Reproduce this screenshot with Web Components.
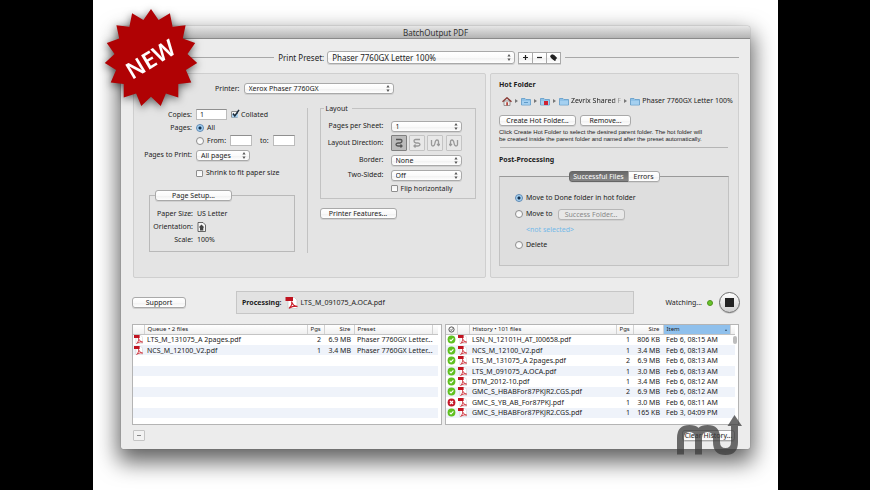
<!DOCTYPE html>
<html lang="en">
<head>
<meta charset="utf-8">
<title>BatchOutput PDF</title>
<style>
html, body { height: 100%; }
body { margin: 0; background: #000; color: #1c1c1c; font: 7px/10px "Noto Sans", "Open Sans", sans-serif; }
</style>
</head>
<body>
<promo-stage>
  <new-badge slot="badge"></new-badge>
  <app-window heading="BatchOutput PDF">
    <preset-bar></preset-bar>
    <div slot="panels"><printer-panel></printer-panel></div>
    <div slot="side"><hot-folder-panel></hot-folder-panel></div>
    <status-bar slot="status"></status-bar>
    <file-queue slot="queue"></file-queue>
    <file-history slot="history"></file-history>
    <footer-bar slot="footer"></footer-bar>
  </app-window>
  <mu-logo slot="logo"></mu-logo>
</promo-stage>

<script>
const controls = `
:host { display: block; }
* { box-sizing: border-box; }
button, input, select { font: inherit; color: inherit; margin: 0; }
button, .select select {
  height: 11px; padding: 0 4px; line-height: 9px; border: 1px solid #a9a9a9; border-radius: 3px;
  background: linear-gradient(#fff, #fafafa 50%, #f0f0f0 51%, #fff); box-shadow: 0 1px 0 #d0d0d0; white-space: nowrap;
}
.select { position: relative; display: block; }
.select select { appearance: none; width: 100%; display: block; padding: 0 12px 0 4px; }
.select svg { position: absolute; right: 4px; top: 2px; width: 4px; height: 7px; fill: #555; pointer-events: none; }
input[type=text] { height: 11px; padding: 0 3px; border: 1px solid #bcbcbc; border-top-color: #8f8f8f; background: #fff; border-radius: 0; }
input[type=radio], input[type=checkbox] {
  appearance: none; width: 8px; height: 8px; flex: none; border: 1px solid #8e8e8e; background: linear-gradient(#f2f2f2, #fff);
}
input[type=radio] { border-radius: 50%; }
input[type=checkbox] { border-radius: 1px; width: 7px; height: 7px; }
input[type=radio]:checked { border-color: #5b87b4; background: radial-gradient(circle, #15304d 0 1px, #9ccdf0 2px, #cfe9fb 4px); }
label { display: flex; align-items: center; gap: 3px; white-space: nowrap; }
fieldset { margin: 0; min-width: 0; border: 1px solid #b9b9b9; padding: 0; }
`;
const arrows = '<svg viewBox="0 0 4 7"><path d="M2 0 3.6 2.6H.4zM2 7 .4 4.4h3.2z"/></svg>';
const pick = (id, text) => `<span class="select"><select id="${id}"><option>${text}</option></select>${arrows}</span>`;
const pdfIcon = `<svg class="pdf" viewBox="0 0 12 12"><path d="M2.5.5h6.5l2.5 2.5v8.5h-9z" fill="#fff" stroke="#c9c9c9" stroke-width=".7"/><path d="M0 0h7.5v4H0z" fill="#c01320"/><path d="M6 4.500C7 7 9 9.500 11 9.500S9 7.800 3.500 11.200C5.500 9.500 6.800 6.500 6 4.500Z" fill="none" stroke="#c9202c" stroke-width="1.100"/></svg>`;
const folderIcon = (extra = '') => `<svg class="ico" viewBox="0 0 10 9"><path d="M.5 1.500h3.500l1 1h4.500v5.500h-9z" fill="#8fc2e8" stroke="#5f9ac8" stroke-width=".8"/><path d="M1 4h8v3.600H1z" fill="#a5d0f0"/>${extra}</svg>`;

function define(name, render) {
  customElements.define(name, class extends HTMLElement {
    constructor() {
      super();
      const t = document.createElement('template');
      t.innerHTML = render(this);
      this.attachShadow({ mode: 'open' }).append(t.content.cloneNode(true));
    }
  });
}

define('promo-stage', () => `
<style>
:host { display: block; box-sizing: border-box; min-height: 100%; padding: 0 92px 0 93px; }
main { box-sizing: border-box; position: relative; min-height: 100vh; background: #fff; padding: 26px 28px 40px; }
::slotted([slot=badge]) { position: absolute; left: 6px; top: 2px; z-index: 2; }
::slotted([slot=logo]) { position: absolute; right: 34px; top: 414px; z-index: 2; }
</style>
<main><slot name="badge"></slot><slot></slot><slot name="logo"></slot></main>`);

define('app-window', el => `
<style>
* { box-sizing: border-box; }
:host { display: block; background: #ececec; border-radius: 3px 3px 2px 2px; box-shadow: 0 0 1px #555, 0 10px 22px 3px rgba(0,0,0,.62); padding-bottom: 8px; }
header { height: 13px; background: linear-gradient(#e6e6e6, #b4b4b4); border-bottom: 1px solid #8a8a8a; border-radius: 3px 3px 0 0; }
h1 { margin: 0; font-size: 8px; line-height: 13px; font-weight: 400; text-align: center; color: #333; }
.panels { display: grid; grid-template-columns: minmax(0, 353fr) minmax(0, 249fr); gap: 4px; padding: 0 11px 0 12px; margin-top: 9px; }
.panels > slot::slotted(div) { border: 1px solid #cfcfcf; border-radius: 2px; background: #e4e4e4; height: 205px; box-sizing: border-box; }
.tables { display: grid; grid-template-columns: minmax(0, 310fr) minmax(0, 294fr); gap: 3px; padding: 0 11px 0 11px; margin-top: 10px; }
</style>
<header><h1>${el.getAttribute('heading') || 'BatchOutput PDF'}</h1></header>
<slot></slot>
<div class="panels"><slot name="panels"></slot><slot name="side"></slot></div>
<slot name="status"></slot>
<div class="tables"><slot name="queue"></slot><slot name="history"></slot></div>
<slot name="footer"></slot>`);

define('preset-bar', () => `
<style>${controls}
.bar { display: flex; align-items: center; font-size: 8px; height: 13px; padding: 0 11px 0 12px; margin-top: 12px; }
.rule { height: 1px; background: #a8a8a8; flex: 143 1 0; }
.rule.end { flex: 176 1 0; }
label { margin: 0 4px 0 4px; gap: 3px; }
.select { width: 188px; }
.select select { height: 13px; line-height: 11px; }
.select svg { top: 3px; }
.group { display: flex; margin-right: 4px; }
.group button { width: 15px; height: 12px; padding: 0; display: grid; place-items: center; border-radius: 0; margin-left: -1px; }
.group svg { width: 9px; height: 9px; }
</style>
<div class="bar"><span class="rule"></span>
<label for="preset">Print Preset: ${pick('preset', 'Phaser 7760GX Letter 100%')}</label>
<div class="group">
<button aria-label="Add preset"><svg viewBox="0 0 9 9"><path d="M4.500 2v5M2 4.500h5" stroke="#222" stroke-width="1.200"/></svg></button>
<button aria-label="Remove preset"><svg viewBox="0 0 9 9"><path d="M2 4.500h5" stroke="#222" stroke-width="1.200"/></svg></button>
<button aria-label="Edit preset"><svg viewBox="0 0 9 9"><path d="M1 3 3 1.200 5.200 2 8.200 5 5.500 7.800 2 5z" fill="#222"/><path d="m3.500 5 3 2.500" stroke="#222" stroke-width="1.400"/></svg></button>
</div><span class="rule end"></span></div>`);

define('printer-panel', () => `
<style>${controls}
.printer { display: flex; align-items: center; gap: 4px; padding-left: 81px; margin-top: 9px; }
.printer .select { width: 150px; }
.cols { display: grid; grid-template-columns: minmax(0, 174fr) minmax(0, 178fr); margin-top: 14px; }
.left { border-right: 1px solid #c2c2c2; height: 145px; }
.rows { display: grid; grid-template-columns: 58px 1fr; column-gap: 4px; align-items: center; grid-template-rows: 13px 14px 11px 18px 18px; }
.rows > :nth-child(odd) { text-align: right; justify-content: end; }
.line { display: flex; align-items: center; gap: 4px; }
.line > input[type=text] { width: 22px; }
#copies { width: 31px; }
.line .select { width: 54px; }
.to { margin-left: 4px; }
.check { position: relative; display: grid; }
.check svg { position: absolute; left: 0; top: -2px; width: 9px; height: 9px; pointer-events: none; }
.setup { margin: 13px 12px 0 15px; height: 57px; padding: 0 0 0 5px; border: 1px solid #b9b9b9; }
.setup button { width: 77px; display: block; margin-top: -6px; }
dl { display: grid; grid-template-columns: 38px 1fr; column-gap: 4px; grid-auto-rows: 13px; margin: 6px 0 0; align-items: center; }
dt { display: flex; justify-content: end; white-space: nowrap; }
dd { margin: 0; display: flex; }
dd svg { width: 9px; height: 10px; }
.right { padding: 0 9px 0 12px; }
.layout { height: 91px; border: 1px solid #c2c2c2; }
.layout h2 { font: inherit; margin: -5px 0 0 3px; padding: 0 2px; background: #e4e4e4; width: 28px; white-space: nowrap; }
.grid { display: grid; grid-template-columns: 63px 1fr; column-gap: 7px; grid-template-rows: 16px 18px 16px 14px 13px; align-items: center; margin: 4px 13px 0 0; }
.grid > :nth-child(odd) { text-align: right; justify-content: end; white-space: nowrap; }
.dirs { display: flex; justify-content: space-between; }
.dirs button { width: 16px; height: 16px; padding: 0; display: grid; place-items: center; border-radius: 1px; background: #e8e8e8; border-color: #c4c4c4; box-shadow: none; }
.dirs button[aria-pressed=true] { background: #bcbcbc; border-color: #808080; }
.dirs svg { width: 10px; height: 10px; fill: none; stroke: #999; stroke-width: 1.300; }
.dirs button[aria-pressed=true] svg { stroke: #555; }
.features { width: 77px; margin-top: 9px; }
</style>
<div class="printer"><label for="printer">Printer:</label>${pick('printer', 'Xerox Phaser 7760GX')}</div>
<div class="cols">
<div class="left">
 <div class="rows">
  <label for="copies">Copies:</label>
  <div class="line"><input id="copies" type="text" value="1"><label><span class="check"><input type="checkbox" checked><svg viewBox="0 0 9 9"><path d="M1 5h6v3.500H1z" fill="#a9d3f2"/><path d="m2 4.500 1.800 2.500L8 .8" fill="none" stroke="#1d2b3a" stroke-width="1.500"/></svg></span>Collated</label></div>
  <span>Pages:</span>
  <label><input type="radio" name="pages" checked>All</label>
  <span></span>
  <div class="line"><label><input type="radio" name="pages">From:</label><input type="text" aria-label="From page"><label class="to" for="to">to:</label><input id="to" type="text"></div>
  <label for="which">Pages to Print:</label>
  <div class="line">${pick('which', 'All pages')}</div>
  <span></span>
  <label><input type="checkbox">Shrink to fit paper size</label>
 </div>
 <div class="setup"><button>Page Setup...</button>
  <dl><dt>Paper Size:</dt><dd>US Letter</dd><dt>Orientation:</dt><dd><svg viewBox="0 0 9 10"><path d="M1 .5h5L8.500 3v6.500H1z" fill="#f5f5f5" stroke="#444" stroke-width=".8"/><path d="M3 8.500V6L2 5l2.500-2.500L7 5 6.300 6v2.500z" fill="#444"/></svg></dd><dt>Scale:</dt><dd>100%</dd></dl>
 </div>
</div>
<div class="right">
 <div class="layout"><h2>Layout</h2>
  <div class="grid">
   <label for="pps">Pages per Sheet:</label>${pick('pps', '1')}
   <span>Layout Direction:</span>
   <div class="dirs">
    <button aria-label="Across then down" aria-pressed="true"><svg viewBox="0 0 10 10"><path d="M2 1.500h4.500q1.500 0 1.500 1.500t-2 2H4Q2 5.200 2 6.500T4 8h4M6.500 6.500 8 8 6.500 9.500"/></svg></button>
    <button aria-label="Reversed across"><svg viewBox="0 0 10 10"><path d="M8 1.500H3.500Q2 1.500 2 3t2 2h2q2 .2 2 1.500T6 8H2.500M3.500 6.500 2 8l1.500 1.500"/></svg></button>
    <button aria-label="Down then across"><svg viewBox="0 0 10 10"><path d="M1.500 2v4.500Q1.500 8 3 8t2-3 2-3 1.500 1.500V7M7 6l1.500 1.500L10 6"/></svg></button>
    <button aria-label="Down reversed"><svg viewBox="0 0 10 10"><path d="M8.500 2v4.500Q8.500 8 7 8T5 5 3 2 1.500 3.500V7M0 6l1.500 1.500L3 6"/></svg></button>
   </div>
   <label for="border">Border:</label>${pick('border', 'None')}
   <label for="sides">Two-Sided:</label>${pick('sides', 'Off')}
   <span></span><label><input type="checkbox">Flip horizontally</label>
  </div>
 </div>
 <button class="features">Printer Features...</button>
</div>
</div>`);

define('hot-folder-panel', () => `
<style>${controls}
section { padding: 6px 9px 0 8px; }
h2 { margin: 0; font-size: 7px; line-height: 10px; font-weight: 700; }
nav { display: flex; align-items: center; gap: 2px; margin: 6px 0 0 3px; height: 10px; white-space: nowrap; }
nav i { width: 0; height: 0; border: 2px solid transparent; border-left: 3px solid #777; border-right: 0; margin: 0 1px; flex: none; }
.ico { width: 10px; height: 9px; flex: none; }
.fade { flex: none; -webkit-mask: linear-gradient(90deg, #000 82%, rgba(0,0,0,.2)); }
.acts { display: flex; gap: 4px; margin-top: 9px; }
.acts button:first-child { width: 77px; } .acts button:last-child { width: 51px; }
p { margin: 3px 0 0; font: 6px/7px "Liberation Sans", Arial, sans-serif; white-space: nowrap; }
hr { border: 0; border-top: 1px solid #b5b5b5; margin: 4px 1px 7px; }
.tabs { display: flex; justify-content: center; margin-top: 6px; position: relative; }
.tabs button:first-child { width: 60px; background: linear-gradient(#6a6a6a, #858585); color: #fff; border-color: #666; border-radius: 3px 0 0 3px; padding: 0; }
.tabs button:last-child { width: 32px; border-radius: 0 3px 3px 0; padding: 0; margin-left: -1px; }
fieldset { background: #dedede; height: 90px; margin-top: -6px; border-color: #c2c2c2; border-top-color: #999; padding: 13px 0 0 15px; }
.line { display: flex; gap: 5px; align-items: center; height: 16px; }
.line button { width: 67px; color: #888; background: #e8e8e8; border-color: #b5b5b5; }
a { display: block; color: #74b9e8; text-decoration: none; font-size: 7px; line-height: 15px; padding-left: 11px; }
</style>
<section>
<h2>Hot Folder</h2>
<nav aria-label="Folder path">
<svg class="ico" viewBox="0 0 10 9"><path d="M2 4h6v4.500H2z" fill="#eee" stroke="#777" stroke-width=".7"/><path d="M.5 4.800 5 .8l4.500 4" fill="none" stroke="#8a3b35" stroke-width="1.400"/><path d="M4.200 5.200h1.800v3.300H4.200z" fill="#b8463c"/></svg><i></i>
${folderIcon('<path d="M3 5.500h4" stroke="#5f9ac8"/>')}<i></i>
${folderIcon('<path d="M4 4h4v4H4z" fill="#cf2233"/>')}<i></i>
${folderIcon()}<span class="fade">Zevrix Shared F</span><i></i>${folderIcon()}<span>Phaser 7760GX Letter 100%</span></nav>
<div class="acts"><button>Create Hot Folder...</button><button>Remove...</button></div>
<p>Click Create Hot Folder to select the desired parent folder. The hot folder will<br>be created inside the parent folder and named after the preset automatically.</p>
<hr>
<h2>Post-Processing</h2>
<div class="tabs" role="tablist"><button role="tab" aria-selected="true">Successful Files</button><button role="tab">Errors</button></div>
<fieldset aria-label="Successful files">
<div class="line"><label><input type="radio" name="after" checked>Move to Done folder in hot folder</label></div>
<div class="line"><label><input type="radio" name="after">Move to</label><button disabled>Success Folder...</button></div>
<a href="#">&lt;not selected&gt;</a>
<div class="line"><label><input type="radio" name="after">Delete</label></div>
</fieldset>
</section>`);

define('status-bar', () => `
<style>${controls}
.bar { display: flex; align-items: center; height: 23px; margin-top: 13px; padding: 0 10px 0 11px; }
.support { width: 54px; }
.now { flex: 1; margin: 0 31px 0 50px; height: 23px; border: 1px solid #c6c6c6; background: #e2e2e2; display: flex; align-items: center; padding-left: 5px; gap: 3px; white-space: nowrap; }
.pdf { width: 13px; height: 12px; }
.led { width: 6px; height: 6px; border-radius: 50%; background: #67c52a; border: 1px solid #51921f; margin: 0 6px 0 5px; }
.stop { width: 21px; height: 21px; border-radius: 50%; padding: 0; display: grid; place-items: center; border: 1px solid #6d6d6d; background: linear-gradient(#fff, #cfcfcf); }
.stop span { width: 9px; height: 9px; background: #222; }
</style>
<div class="bar"><button class="support">Support</button>
<div class="now"><b>Processing:</b>${pdfIcon}<span>LTS_M_091075_A.OCA.pdf</span></div>
<span>Watching...</span><span class="led"></span><button class="stop" aria-label="Stop"><span></span></button></div>`);

const tableStyle = `
:host { display: block; min-width: 0; }
* { box-sizing: border-box; }
.frame { border: 1px solid #b4b4b4; background: #fff; height: 101px; padding-right: 3px; position: relative; }
table { width: 100%; height: 93px; border-collapse: collapse; table-layout: fixed; }
th, td { padding: 0 3px; line-height: 9px; white-space: nowrap; overflow: hidden; text-align: left; font-weight: 400; height: 10px; }
th { font-size: 6px; height: 9px; border-right: 1px solid #d2d2d2; border-bottom: 1px solid #c4c4c4; background: linear-gradient(#fff, #efefef); }
th:last-child { border-right: 0; }
tbody tr:nth-child(even) { background: #eff3fa; }
td.n, th.n { text-align: right; }
td:has(svg) { padding: 0 0 0 1px; }
td svg, th svg { display: block; width: 9px; height: 9px; }
`;
define('file-queue', () => {
  const rows = [['LTS_M_131075_A 2pages.pdf', 2, '6.9 MB'], ['NCS_M_12100_V2.pdf', 1, '3.4 MB']];
  return `<style>${tableStyle}</style><div class="frame"><table>
<colgroup><col style="width:11px"><col><col style="width:17px"><col style="width:30px"><col style="width:78px"><col style="width:6px"></colgroup>
<thead><tr><th></th><th>Queue • 2 files</th><th class="n">Pgs</th><th class="n">Size</th><th>Preset</th><th></th></tr></thead><tbody>
${rows.map(r => `<tr><td>${pdfIcon}</td><td>${r[0]}</td><td class="n">${r[1]}</td><td class="n">${r[2]}</td><td colspan="2">Phaser 7760GX Letter...</td></tr>`).join('')}
${'<tr><td colspan="6"></td></tr>'.repeat(6)}</tbody></table></div>`;
});

define('file-history', () => {
  const rows = [
    ['LSN_N_12101H_AT_I00658.pdf', 1, '806 KB', 'Feb 6, 08:15 AM'],
    ['NCS_M_12100_V2.pdf', 1, '3.4 MB', 'Feb 6, 08:13 AM'],
    ['LTS_M_131075_A 2pages.pdf', 2, '6.9 MB', 'Feb 6, 08:13 AM'],
    ['LTS_M_091075_A.OCA.pdf', 1, '3.0 MB', 'Feb 6, 08:13 AM'],
    ['DTM_2012-10.pdf', 1, '3.4 MB', 'Feb 6, 08:12 AM'],
    ['GMC_S_HBABFor87PKJR2.CGS.pdf', 2, '6.9 MB', 'Feb 6, 08:12 AM'],
    ['GMC_S_YB_AB_For87PKJ.pdf', 1, '3.0 MB', 'Feb 6, 08:11 AM', true],
    ['GMC_S_HBABFor87PKJR2.CGS.pdf', 1, '165 KB', 'Feb 3, 04:09 PM']];
  const ok = '<svg viewBox="0 0 9 9"><circle cx="4.500" cy="4.500" r="3.900" fill="#5fc01f"/><path d="m2.700 4.600 1.300 1.300 2.400-2.600" fill="none" stroke="#fff" stroke-width="1.100"/></svg>';
  const bad = '<svg viewBox="0 0 9 9"><circle cx="4.500" cy="4.500" r="3.900" fill="#c4182a"/><path d="m3 3 3 3M6 3 3 6" stroke="#fff" stroke-width="1.300"/></svg>';
  return `<style>${tableStyle}
.sorted { background: #8fc0ec; }
.sorted div { display: flex; justify-content: space-between; align-items: center; }
.sorted i { border: 1px solid transparent; border-bottom: 2px solid #34506c; border-top: 0; }
.thumb { position: absolute; right: 1px; top: 11px; width: 4px; height: 8px; border-radius: 2px; background: #bdbdbd; }
</style><div class="frame"><table>
<colgroup><col style="width:11px"><col style="width:12px"><col><col style="width:17px"><col style="width:30px"><col style="width:67px"><col style="width:5px"></colgroup>
<thead><tr><th style="padding:0 0 0 1px"><svg viewBox="0 0 9 9"><circle cx="4.500" cy="4.500" r="2.600" fill="none" stroke="#444" stroke-width=".9"/><path d="m3.300 4.500 1 1 1.500-2" fill="none" stroke="#444" stroke-width=".8"/></svg></th><th></th><th>History • 101 files</th><th class="n">Pgs</th><th class="n">Size</th><th class="sorted"><div>Item<i></i></div></th><th></th></tr></thead><tbody>
${rows.map(r => `<tr><td>${r[4] ? bad : ok}</td><td>${pdfIcon}</td><td>${r[0]}</td><td class="n">${r[1]}</td><td class="n">${r[2]}</td><td colspan="2">${r[3]}</td></tr>`).join('')}
</tbody></table><span class="thumb"></span></div>`;
});

define('footer-bar', () => `
<style>${controls}
.bar { display: flex; justify-content: space-between; align-items: center; padding: 0 15px 0 12px; margin-top: 5px; }
.less { width: 12px; padding: 0; border-color: #c4c4c4; display: grid; place-items: center; border-radius: 1px; box-shadow: none; background: #f2f2f2; }
.less span { width: 4px; height: 1px; background: #888; }
.clear { width: 53px; padding: 0; }
</style>
<div class="bar"><button class="less" aria-label="Remove"><span></span></button><button class="clear">Clear History...</button></div>`);

define('new-badge', () => {
  const pts = [];
  for (let i = 0; i < 30; i++) {
    const a = i * Math.PI / 15, k = i % 2 ? 0.79 : 1;
    pts.push((52 + 46.5 * k * Math.sin(a)).toFixed(1) + ',' + (56 - 49 * k * Math.cos(a)).toFixed(1));
  }
  return `<style>:host { display: block; width: 104px; height: 112px; } svg { display: block; width: 100%; height: 100%; overflow: visible; filter: drop-shadow(0 2px 4px rgba(0,0,0,.6)); }
text { font: 600 23px "Noto Sans", "Open Sans", sans-serif; fill: #fff; text-anchor: middle; }</style>
<svg viewBox="0 0 104 112"><polygon points="${pts.join(' ')}" fill="#b00204"/><text x="51" y="65" transform="rotate(-31 52 56)">NEW</text></svg>`;
});

define('mu-logo', () => `
<style>:host { display: block; width: 68px; height: 42px; pointer-events: none; } svg { display: block; width: 100%; height: 100%; }</style>
<svg viewBox="0 0 68 42" opacity=".75"><path d="M4.500 40.500V24q0-9.500 9-9.500t9 9.500v16.500V24q0-9.500 9-9.500t9 9.500v4q0 9.500 9 9.500t9-9.500V10" fill="none" stroke="#3c3c3c" stroke-width="7"/><path d="M51.500 12 58.500 1l7.500 11z" fill="#3c3c3c"/></svg>`);
</script>
</body>
</html>
